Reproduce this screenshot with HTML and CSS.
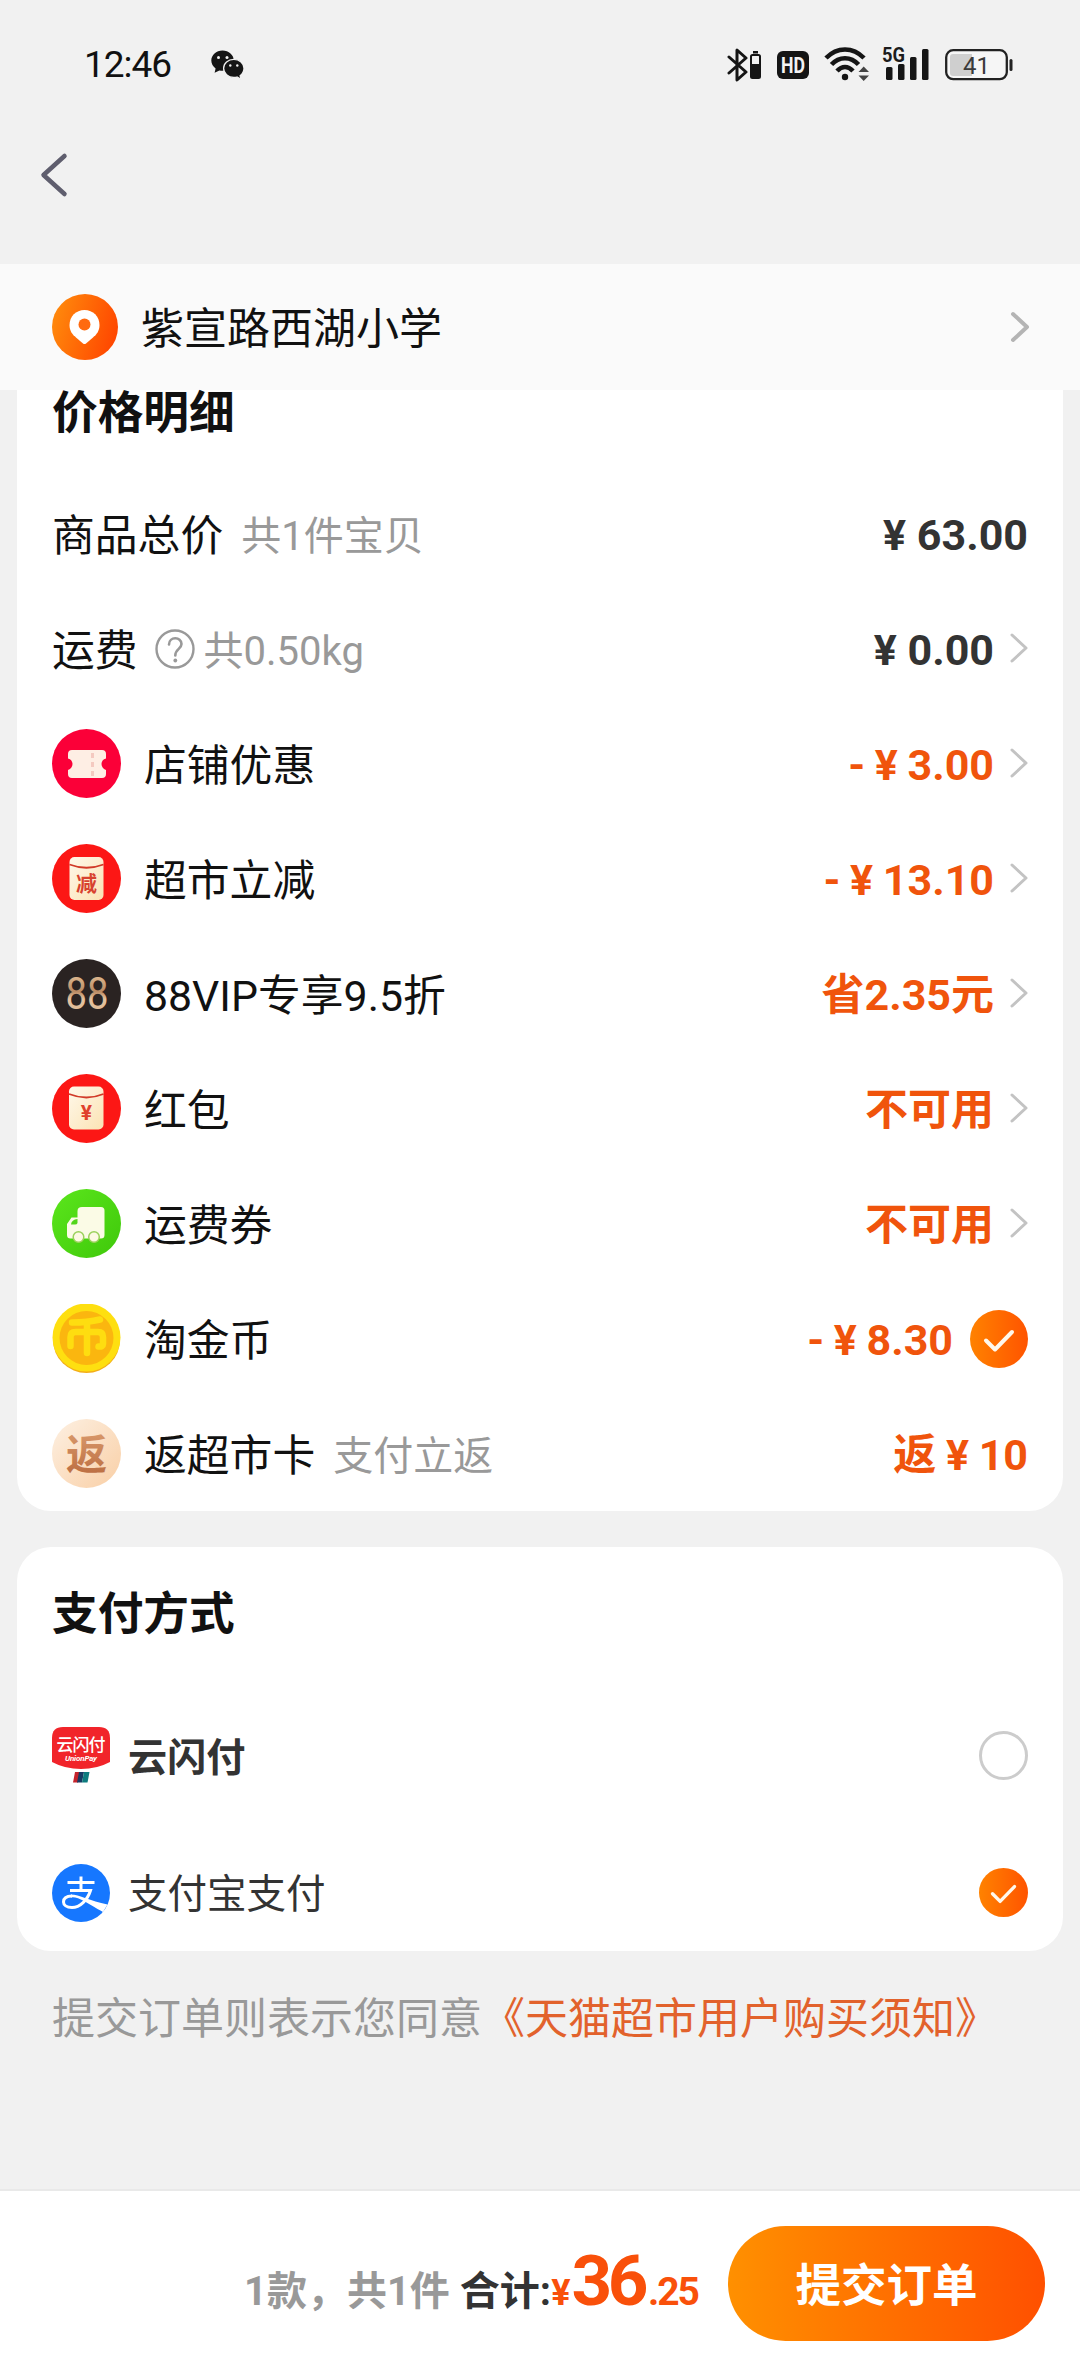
FILE: index.html
```html
<!DOCTYPE html>
<html lang="zh-CN">
<head>
<meta charset="utf-8">
<title>确认订单</title>
<link rel="stylesheet" href="styles.css">
</head>
<body>
<svg class="defs" width="0" height="0" aria-hidden="true">
  <defs>
    <linearGradient id="orange" x1="0" x2="1" y1="0.3" y2="0.6"><stop offset="0" stop-color="#ff8a0c"/><stop offset="1" stop-color="#ff4600"/></linearGradient>
    <linearGradient id="check" x1="0" x2="1"><stop offset="0" stop-color="#ff8200"/><stop offset="1" stop-color="#ff5400"/></linearGradient>
    <linearGradient id="packet" x1="0" x2="1" y1="0" y2="1"><stop offset="0" stop-color="#fff8ea"/><stop offset="1" stop-color="#fbe3b4"/></linearGradient>
    <linearGradient id="green" x1="0" x2="1" y1="0" y2="1"><stop offset="0" stop-color="#5be61c"/><stop offset="1" stop-color="#3fc80a"/></linearGradient>
    <linearGradient id="cream" x1="0" x2="1" y1="0" y2="1"><stop offset="0" stop-color="#fdf0e2"/><stop offset="1" stop-color="#f9cfa6"/></linearGradient>
    <linearGradient id="fan" x1="0" x2="0" y1="0" y2="1"><stop offset="0" stop-color="#d9996b"/><stop offset="1" stop-color="#b96a3e"/></linearGradient>
    <linearGradient id="gold" x1="0" x2="0" y1="0" y2="1"><stop offset="0" stop-color="#f0cfa6"/><stop offset=".45" stop-color="#b98a63"/><stop offset=".6" stop-color="#e6c3a0"/><stop offset="1" stop-color="#d9b48c"/></linearGradient>
    <symbol id="chev" viewBox="0 0 20 32"><path d="M3 3 L17 16 L3 29" fill="none" stroke="currentColor" stroke-linecap="round" stroke-linejoin="round"/></symbol>
    <symbol id="tick" viewBox="0 0 58 58"><circle cx="29" cy="29" r="29" fill="url(#check)"/><path d="M16 30.500 L25 39.500 L42 22" fill="none" stroke="#fff8ec" stroke-width="4" stroke-linecap="round" stroke-linejoin="round"/></symbol>
  </defs>
</svg>

<header class="status">
  <span class="clock">12:46</span>
  <svg class="wechat" width="34" height="30" viewBox="0 0 34 30"><path d="M11.500 .5C5.200.5.300 5 .300 10.600c0 3.300 1.700 6 4.300 7.900l-1 4.300 4.800-2.400c1 .3 2.100.4 3.100.4 6.300 0 11.300-4.500 11.300-10.200S17.800.5 11.500.5z" fill="#151515"/><path d="M22.800 9.300c-5.700 0-10.200 4-10.200 9s4.500 9.200 10.200 9.200c1.100 0 2.200-.2 3.200-.5l4 2.200-.9-3.500c2.400-1.700 3.900-4.300 3.900-7.400 0-5-4.500-9-10.200-9z" fill="#151515" stroke="#f1f1f1" stroke-width="1.300"/><g fill="#f1f1f1"><circle cx="7.500" cy="7.500" r="1.500"/><circle cx="16" cy="7.500" r="1.500"/><circle cx="19.300" cy="15.500" r="1.200"/><circle cx="26.300" cy="15.500" r="1.200"/></g></svg>
  <div class="indicators">
    <svg width="36" height="36" viewBox="0 0 36 36"><path d="M2 10 L19 25 L10 33 V3 L19 11 L2 26" fill="none" stroke="#151515" stroke-width="3" stroke-linejoin="round" stroke-linecap="round"/><rect x="26" y="4" width="5" height="2.500" fill="#151515"/><rect x="24" y="8" width="9" height="23" rx="1.500" fill="none" stroke="#151515" stroke-width="2"/><rect x="24" y="17" width="9" height="14" fill="#151515"/></svg>
    <svg class="hd" width="32" height="34" viewBox="0 -3 32 34"><rect width="32" height="28" rx="6" fill="#151515"/><text x="16" y="22" text-anchor="middle" textLength="24" lengthAdjust="spacingAndGlyphs" font-size="22" font-weight="700" fill="#f3f3f3">HD</text></svg>
    <svg class="wifi" width="46" height="36" viewBox="0 0 46 36"><g fill="none" stroke="#151515" stroke-width="4.500"><path d="M2 12 C13 .5 29 .5 40 12"/><path d="M7.500 18.500 C15 10 27 10 34.500 18.500"/><path d="M13 25 C18 19.500 24 19.500 29 25"/></g><circle cx="21" cy="31" r="3.200" fill="#151515"/><path d="M34.500 26 L39.700 20.500 L45 26z M34.500 29.500 L39.700 35 L45 29.500z" fill="#444"/></svg>
    <svg class="signal" width="48" height="42" viewBox="0 -6 48 42"><text x="0" y="14.500" textLength="23" lengthAdjust="spacingAndGlyphs" font-size="20.500" font-weight="700" fill="#1c1c1c">5G</text><g fill="#151515"><rect x="4" y="20" width="6.500" height="13" rx="1.500"/><rect x="16" y="17" width="6.500" height="16" rx="1.500"/><rect x="28" y="10" width="6.500" height="23" rx="1.500"/><rect x="40" y="2" width="6.500" height="31" rx="1.500"/></g></svg>
    <svg class="battery" width="68" height="32" viewBox="0 0 68 32"><rect x="1.200" y="1.200" width="60.600" height="29" rx="7" fill="#f6f6f6" stroke="#222" stroke-width="2.300"/><path d="M8 5 H27 V27 H8 Q5 27 5 24 V8 Q5 5 8 5z" fill="#cfcfcf"/><rect x="64.500" y="10" width="3" height="12" rx="1.500" fill="#222"/><text x="31.500" y="24.500" text-anchor="middle" font-size="24" fill="#3a3a3a">41</text></svg>
  </div>
</header>
<nav class="nav"><svg width="30" height="46" viewBox="0 0 30 46"><path d="M25.500 4 L4.500 23 L25.500 42" fill="none" stroke="#5f5e6e" stroke-width="4.500" stroke-linecap="round" stroke-linejoin="round"/></svg></nav>

<section class="address">
  <svg width="66" height="66" viewBox="0 0 66 66"><circle cx="33" cy="33" r="33" fill="url(#orange)"/><path d="M32.500 16 C24 16 17.500 22.500 17.500 31 C17.500 37 20.500 40.500 24 43.500 L31 49.500 Q32.500 50.600 34 49.500 L41 43.500 C44.500 40.500 47.500 37 47.500 31 C47.500 22.500 41 16 32.500 16z" fill="#fff"/><circle cx="32.500" cy="30.500" r="6" fill="#ff6a10"/></svg>
  <span class="place">紫宣路西湖小学</span>
  <svg class="chev strong"><use href="#chev"/></svg>
</section>

<main>
  <section class="card prices">
    <h2>价格明细</h2>
    <div class="row"><span class="label">商品总价</span><span class="note n1">共1件宝贝</span><b class="value dark">¥ 63.00</b></div>
    <div class="row"><span class="label">运费</span>
      <svg class="help" width="40" height="40" viewBox="0 0 40 40"><circle cx="20" cy="20" r="18.500" fill="none" stroke="#999" stroke-width="2.400"/><path d="M14 15.500 C14 7.300 26.500 7.300 26.500 15 C26.500 20 20.300 20 20.300 26.500" fill="none" stroke="#999" stroke-width="2.600" stroke-linecap="round"/><circle cx="20.300" cy="31.500" r="1.900" fill="#999"/></svg>
      <span class="note">共0.50kg</span><b class="value dark">¥ 0.00</b><svg class="chev"><use href="#chev"/></svg></div>
    <div class="row">
      <svg class="icon" viewBox="0 0 69 69"><circle cx="34.500" cy="34.500" r="34.500" fill="#fb0038"/><path d="M20 21 H50 Q54 21 54 25 V29.500 C48 31 48 39 54 41 V45 Q54 49 50 49 H20 Q16 49 16 45 V41 C22 39 22 31 16 29.500 V25 Q16 21 20 21z" fill="#feeee4"/><g fill="#f4c9c0"><rect x="39" y="24" width="3" height="5"/><rect x="39" y="33" width="3" height="5"/><rect x="39" y="42" width="3" height="5"/></g></svg>
      <span class="label">店铺优惠</span><b class="value">- ¥ 3.00</b><svg class="chev"><use href="#chev"/></svg></div>
    <div class="row">
      <svg class="icon" viewBox="0 0 69 69"><circle cx="34.500" cy="34.500" r="34.500" fill="#fc1715"/><rect x="17.500" y="13" width="34" height="43" rx="5" fill="url(#packet)"/><path d="M17.500 20.500 Q34.500 27 51.500 20.500" fill="none" stroke="#d13a28" stroke-width="1.800"/><text x="34.500" y="46.500" text-anchor="middle" font-size="21" font-weight="700" fill="#d8422f">减</text></svg>
      <span class="label">超市立减</span><b class="value">- ¥ 13.10</b><svg class="chev"><use href="#chev"/></svg></div>
    <div class="row">
      <svg class="icon" viewBox="0 0 69 69"><circle cx="34.500" cy="34.500" r="34.500" fill="#2a2322"/><text x="35" y="50" text-anchor="middle" textLength="43" lengthAdjust="spacingAndGlyphs" font-size="44" fill="url(#gold)">88</text></svg>
      <span class="label">88VIP专享9.5折</span><b class="value">省2.35元</b><svg class="chev"><use href="#chev"/></svg></div>
    <div class="row">
      <svg class="icon" viewBox="0 0 69 69"><circle cx="34.500" cy="34.500" r="34.500" fill="#fc1715"/><rect x="17" y="12.500" width="34.500" height="43" rx="5" fill="url(#packet)"/><path d="M17 20 Q34.500 27 51.500 20" fill="none" stroke="#d13a28" stroke-width="1.800"/><text x="34.500" y="46" text-anchor="middle" font-size="21" font-weight="700" fill="#e0402c">¥</text></svg>
      <span class="label">红包</span><b class="value">不可用</b><svg class="chev"><use href="#chev"/></svg></div>
    <div class="row">
      <svg class="icon" viewBox="0 0 69 69"><circle cx="34.500" cy="34.500" r="34.500" fill="url(#green)"/><path d="M30 18 H49 Q52.500 18 52.500 21.500 V46 Q52.500 49.500 49 49.500 H18.500 Q15 49.500 15 46 V35 L19.500 28.500 H25.500 V22 Q25.500 18 30 18z" fill="#fbfbe6"/><path d="M19 35.500 Q19.500 30.500 25.500 30 V34 Q25 35.500 23 35.500z" fill="#52d51a"/><g fill="#fdf9e4" stroke="#9bd15c" stroke-width="1.500"><circle cx="26.500" cy="48" r="5.300"/><circle cx="42" cy="48" r="5.300"/></g></svg>
      <span class="label">运费券</span><b class="value">不可用</b><svg class="chev"><use href="#chev"/></svg></div>
    <div class="row">
      <svg class="icon" viewBox="0 0 69 69"><ellipse cx="34.500" cy="36" rx="33.500" ry="33" fill="#f3ae1a"/><circle cx="34.500" cy="33.500" r="34" fill="#fedf10"/><circle cx="34.500" cy="34" r="27" fill="#fbb60f"/><g fill="none" stroke="#fedd10" stroke-width="6.500" stroke-linecap="round" stroke-linejoin="round"><path d="M20 18.500 Q36 18.500 48 15.500"/><path d="M35 18 V49"/><path d="M18.500 42 V33 Q18.500 28 23.500 28 H46 Q51 28 51 33 V40 Q51 43 46.500 42.500"/></g></svg>
      <span class="label">淘金币</span><b class="value">- ¥ 8.30</b><svg class="tick"><use href="#tick"/></svg></div>
    <div class="row">
      <svg class="icon" viewBox="0 0 69 69"><circle cx="34.500" cy="34.500" r="34.500" fill="url(#cream)"/><text x="34.500" y="50" text-anchor="middle" font-size="41" font-weight="700" fill="url(#fan)">返</text></svg>
      <span class="label">返超市卡</span><span class="note n2">支付立返</span><b class="value">返 ¥ 10</b></div>
  </section>

  <section class="card pay">
    <h2>支付方式</h2>
    <div class="option">
      <svg width="58" height="58" viewBox="0 0 58 58"><path d="M11 0 H47 Q58 0 58 11 V35 Q45 42 29 42 Q13 42 0 35 V11 Q0 0 11 0z" fill="#f1242a"/><text x="29" y="24" text-anchor="middle" textLength="49" font-size="17" font-weight="500" fill="#fff">云闪付</text><text x="29" y="34" text-anchor="middle" textLength="32" font-size="8" font-weight="700" font-style="italic" fill="#fff">UnionPay</text><path d="M23 45 H28 L26 55.500 H21z" fill="#c5242c"/><path d="M27 45 H32 L30 55.500 H25z" fill="#173a63"/><path d="M32 45 H37.500 L35.500 55.500 H30z" fill="#0d7b7e"/></svg>
      <span class="method strong">云闪付</span><i class="radio"></i>
    </div>
    <div class="option">
      <svg width="58" height="58" viewBox="0 0 58 58"><circle cx="29" cy="29" r="29" fill="#1677ff"/><g fill="none" stroke="#fff" stroke-width="3"><path d="M15.500 18.500 H42.500"/><path d="M29 12.500 V26"/><path d="M18 26.500 H38.500 C35.500 36 28 43.500 20 43.500 C14.500 43.500 11.500 41 11.500 38 C11.500 34 15 32 20 32"/></g><path d="M19 30.500 C27 30.500 38 37 55.500 40.500 L51 48 C45 45 33 37 26 34.300 Q22 33 19 33.500z" fill="#fff"/></svg>
      <span class="method">支付宝支付</span><svg class="tick small"><use href="#tick"/></svg>
    </div>
  </section>
  <p class="terms">提交订单则表示您同意<a>《天猫超市用户购买须知》</a></p>
</main>

<footer class="checkout">
  <div class="sum"><span class="count">1款，共1件</span><span class="total">合计:</span><span class="yen">¥</span><span class="big">36</span><span class="cents">.25</span></div>
  <button class="submit">提交订单</button>
</footer>
</body>
</html>
```
FILE: styles.css
```css
* { box-sizing: border-box; }
body {
  margin: 0;
  width: 1080px;
  height: 2376px;
  overflow: hidden;
  display: flex;
  flex-direction: column;
  background: #f1f1f1;
  color: #111;
  font-family: Roboto, "Noto Sans CJK SC", sans-serif;
  line-height: 1.2;
}
svg { display: block; flex: none; }
.defs { position: absolute; }
h2, p { margin: 0; }

.status { height: 130px; padding: 0 67px 0 84px; display: flex; align-items: center; }
.clock { font-size: 37px; letter-spacing: -1px; width: 127px; padding-top: 1px; }
.indicators { margin-left: auto; display: flex; align-items: center; }
.hd { margin-left: 14px; }
.wifi { margin-left: 15px; margin-top: -3px; }
.signal { margin-left: 12px; margin-top: -6px; }
.battery { margin-left: 15px; }

.nav { height: 134px; padding: 22px 0 0 39px; }

.address { height: 126px; flex: none; padding: 0 51px 0 52px; display: flex; align-items: center; background: #fafafa; }
.place { margin-left: 23px; padding-top: 6px; font-size: 43px; }

.chev { width: 20px; height: 32px; color: #c3c3c3; stroke-width: 3; margin-left: 15px; margin-right: -1px; margin-top: -2px; }
.chev.strong { margin: 0 -1px 0 auto; color: #b4b4b4; stroke-width: 4; }

.card { margin: 0 17px; padding: 0 35px; background: #fff; border-radius: 34px; }
.card h2 { font-size: 45.700px; font-weight: 700; line-height: 50px; }
.prices { border-radius: 0 0 34px 34px; height: 1121px; }
.card.prices h2 { height: 86px; line-height: 47px; }
.row { height: 115px; display: flex; align-items: center; }
.icon { width: 69px; height: 69px; margin-right: 23px; }
.label { font-size: 42.800px; padding-top: 6px; white-space: nowrap; }
.note { font-size: 40px; padding-top: 6px; color: #999; }
.n1 { margin-left: 18px; }
.n2 { margin-left: 18px; }
.help { margin: 0 9px 0 17px; }
.value { margin-left: auto; font-size: 43px; font-weight: 700; color: #f0540c; padding-top: 4px; white-space: nowrap; word-spacing: -1px; }
.value.dark { color: #333; word-spacing: 0; }
.tick { width: 58px; height: 58px; margin-left: 17px; }
.tick.small { width: 49px; height: 49px; margin-left: auto; }

.pay { margin-top: 36px; height: 404px; padding-top: 43px; }
.pay h2 { height: 97px; }
.option { height: 137px; display: flex; align-items: center; }
.method { margin-left: 18px; padding-top: 4px; font-size: 39.500px; color: #333; }
.method.strong { font-weight: 700; padding-top: 7px; font-size: 39.200px; }
.radio { width: 49px; height: 49px; margin-left: auto; border: 3px solid #ccc; border-radius: 50%; }

.terms { padding: 43px 52px 0; font-size: 43px; color: #999; white-space: nowrap; }
.terms a { color: #e2622c; }

.checkout { margin-top: auto; height: 187px; flex: none; padding: 0 35px; border-top: 2px solid #e9e9e9; background: #fff; display: flex; align-items: center; justify-content: flex-end; }
.sum { display: flex; align-items: baseline; font-size: 40px; font-weight: 700; margin: -5px 30px 0 0; white-space: nowrap; }
.count { color: #999; margin-right: 10px; }
.total { color: #333; }
.yen, .big, .cents { color: #f9500a; font-weight: 700; }
.yen { font-size: 36px; margin-right: 1px; }
.big { font-size: 71px; letter-spacing: -4.500px; }
.cents { font-size: 39px; letter-spacing: -2px; margin-left: 4px; }
.submit { width: 317px; height: 115px; padding: 0 0 4px; border: 0; border-radius: 58px; background: linear-gradient(90deg, #ff9000, #ff5000); color: #fff; font: 700 45.500px Roboto, "Noto Sans CJK SC", sans-serif; }
```
